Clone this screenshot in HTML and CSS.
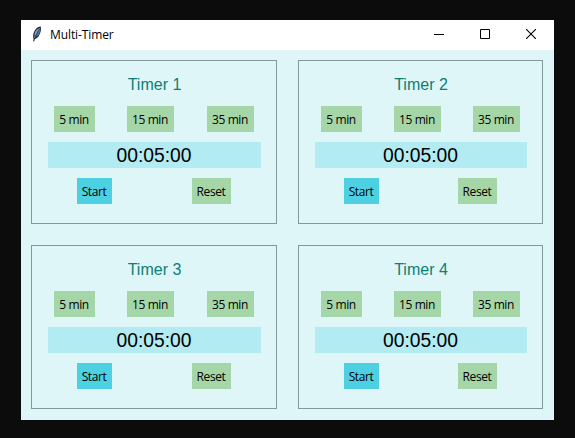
FILE: index.html
```
<!DOCTYPE html>
<html lang="en">
<head>
<meta charset="utf-8">
<title>Multi-Timer</title>
<link rel="stylesheet" href="styles.css">
</head>
<body>
<div class="window">
  <header class="titlebar">
    <svg class="feather" width="12" height="16" viewBox="0 0 12 16">
      <path d="M2.600 13C1.400 10 2.400 6 4.600 3.300 6 1.500 8 .5 9.800.6c.6 3-.1 6.500-2 9.300-1.200 1.700-2.700 2.800-4.300 3.300z" fill="#1d2c42"/>
      <path d="M3.400 10C3.300 7 5 3.800 7.600 2.200L5.400 7z" fill="#8db0d0"/>
      <path d="M4.900 10.800C6 8 7.700 5 9.100 2c.3 3-.5 5.500-2 7.500z" fill="#4c7aac"/>
      <path d="M2.800 14C3.800 10 5.500 6 8.600 2" fill="none" stroke="#b4cbe0" stroke-width=".5"/>
      <path d="M2.700 15.400l.7-3.400" stroke="#111" stroke-width="1"/>
    </svg>
    <h1 class="title">Multi-Timer</h1>
    <div class="controls">
      <svg width="10" height="10" viewBox="0 0 10 10"><path d="M0 5.500h10" stroke="#000"/></svg>
      <svg width="10" height="10" viewBox="0 0 10 10"><path d="M.5.5h9v9h-9z" fill="none" stroke="#000"/></svg>
      <svg width="10" height="10" viewBox="0 0 10 10"><path d="M0 0l10 10M10 0L0 10" stroke="#000" stroke-width="1.100"/></svg>
    </div>
  </header>
  <main class="timers">
    <section class="timer">
      <h2 class="name">Timer 1</h2>
      <div class="presets"><button class="btn short">5 min</button><button class="btn">15 min</button><button class="btn last">35 min</button></div>
      <div class="display">00:05:00</div>
      <div class="actions"><button class="btn start">Start</button><button class="btn reset">Reset</button></div>
    </section>
    <section class="timer">
      <h2 class="name">Timer 2</h2>
      <div class="presets"><button class="btn short">5 min</button><button class="btn">15 min</button><button class="btn last">35 min</button></div>
      <div class="display">00:05:00</div>
      <div class="actions"><button class="btn start">Start</button><button class="btn reset">Reset</button></div>
    </section>
    <section class="timer">
      <h2 class="name">Timer 3</h2>
      <div class="presets"><button class="btn short">5 min</button><button class="btn">15 min</button><button class="btn last">35 min</button></div>
      <div class="display">00:05:00</div>
      <div class="actions"><button class="btn start">Start</button><button class="btn reset">Reset</button></div>
    </section>
    <section class="timer">
      <h2 class="name">Timer 4</h2>
      <div class="presets"><button class="btn short">5 min</button><button class="btn">15 min</button><button class="btn last">35 min</button></div>
      <div class="display">00:05:00</div>
      <div class="actions"><button class="btn start">Start</button><button class="btn reset">Reset</button></div>
    </section>
  </main>
</div>
</body>
</html>
```
FILE: styles.css
```
* { box-sizing: border-box; }
body {
  margin: 0;
  height: 438px;
  padding: 20px 21px 18px;
  background: #0c0c0c;
  overflow: hidden;
}
.window {
  width: 533px;
  height: 400px;
  background: #dff6f8;
}
.titlebar {
  display: flex;
  align-items: center;
  height: 30px;
  padding: 0 18px 0 10px;
  background: #fff;
}
.feather { margin-bottom: 2px; }
.title {
  margin: 0 0 1px 7px;
  font: 400 12px/16px "Open Sans", sans-serif;
  letter-spacing: -0.1px;
  color: #000;
}
.controls {
  display: flex;
  gap: 36px;
  margin: 0 0 2px auto;
}
.controls svg { display: block; }
.timers {
  display: grid;
  grid-template-columns: 246px 245px;
  grid-template-rows: 164px 164px;
  gap: 21px;
  padding: 10px;
}
.timer {
  border: 1px solid #83989b;
  padding: 13px 15px 0 16px;
}
.name {
  margin: 0 0 10px;
  font: 400 16px/22px "Liberation Sans", Arial, sans-serif;
  text-align: center;
  color: #0b8074;
}
.presets {
  display: flex;
  gap: 32px;
  padding: 0 7px 0 6px;
}
.last { margin-left: auto; }
.btn {
  width: 47px;
  height: 26px;
  padding: 1px 1px 0 0;
  border: 0;
  background: #a5d6a7;
  color: #000;
  font: 400 12px/25px "Open Sans", sans-serif;
  letter-spacing: -0.4px;
  white-space: nowrap;
}
.short { width: 41px; }
.display {
  height: 26px;
  margin: 10px 0;
  padding-right: 1px;
  background: #b2ebf2;
  font: 400 19.3px/27px "Liberation Sans", Arial, sans-serif;
  text-align: center;
  color: #000;
}
.actions {
  display: flex;
  justify-content: space-between;
  padding: 0 30px 0 29px;
}
.start { width: 35px; background: #4dd0e1; }
.reset { width: 39px; }
```
